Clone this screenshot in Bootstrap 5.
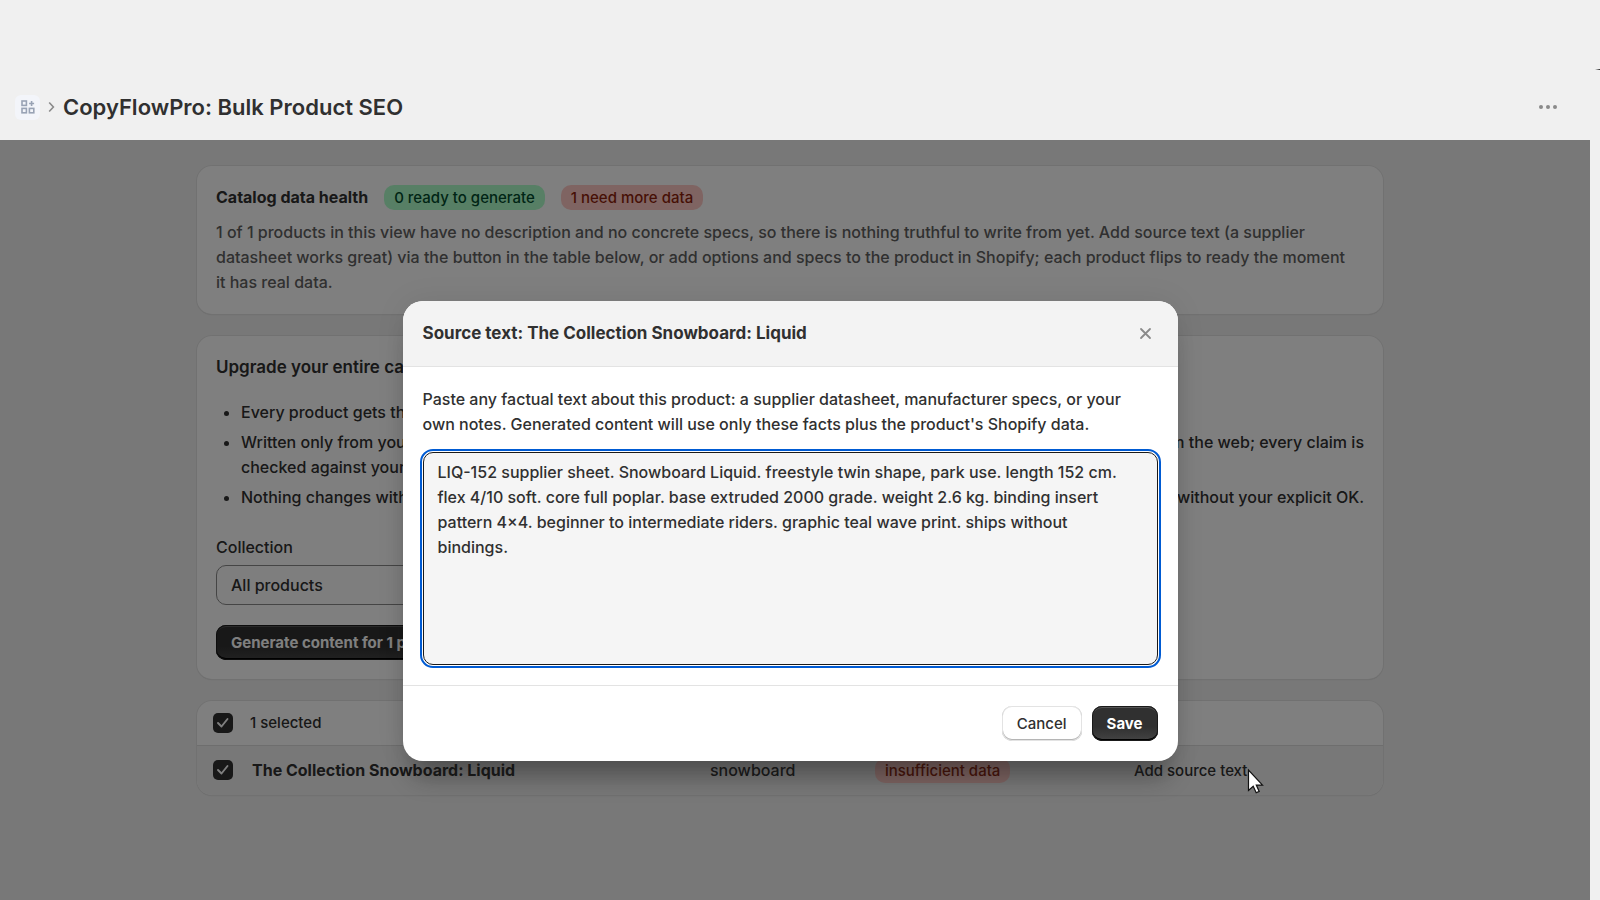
<!DOCTYPE html>
<html lang="en">
<head>
<meta charset="utf-8">
<meta name="viewport" content="width=device-width, initial-scale=1">
<title>CopyFlowPro: Bulk Product SEO</title>
<link rel="stylesheet" href="https://cdn.jsdelivr.net/npm/bootstrap@5.3.0/dist/css/bootstrap.min.css">
<style>
  body { font-family: Inter, "Liberation Sans", sans-serif; font-size: 16px; line-height: 25px; font-weight: 450; color: #303030; background: #f0f0f0; }
  .title-bar { padding: 74px 41px 0 15px; min-height: 140px; }
  .title-bar::after { content: ""; position: absolute; top: 69px; right: 0; width: 5px; height: 1px; background: linear-gradient(90deg, transparent, #222); }
  .title-bar h1 { font-size: 22px; line-height: 30px; font-weight: 600; }
  .app-chip { width: 25px; height: 25px; border-radius: 6px; background: #f3f5fa; }
  .app-frame { margin-right: 10px; background: #f1f1f1; overflow: hidden; }
  .app-content { max-width: 1186px; margin: 26px auto 0; gap: 22px; }
  .app-inner { padding-right: 10px; }
  .panel { background: #fff; border-radius: 15px; box-shadow: 0 0 0 1px #e3e3e3, 0 1px 1px #c4c4c4; }
  .panel-pad { padding: 19px; }
  .panel h2, .modal-title { font-size: 17px; line-height: 25px; font-weight: 600; margin: 0; }
  .panel h2.fs-body { font-size: 16px; font-weight: 650; }
  .panel p { padding-right: 10px; }
  .health-head { gap: 16px; margin-bottom: 10px; }
  .tone { border-radius: 10px; padding: 0 10px; font-size: 15px; line-height: 25px; display: inline-block; }
  .tone-ok { background: #affeca; color: #014b2c; }
  .tone-bad { background: #fec9c5; color: #8e1f0b; }
  .muted { color: #616161; }
  .points { padding-left: 25px; margin: 20px 0 25px; }
  .points li + li { margin-top: 5px; }
  .field-label { margin-bottom: 5px; }
  .form-select { height: 40px; border: 1px solid #8a8a8a; border-radius: 10px; padding: 0 14px; margin-bottom: 20px; font-size: 16px; font-weight: 450; color: #303030; background-color: #fdfdfd; }
  .btn { height: 35px; border-radius: 10px; padding: 0 15px; font-size: 15px; line-height: 25px; border: 0; }
  .btn-solid, .btn-solid:hover { background: linear-gradient(#303030 60%, #444); color: #fff; font-weight: 700; box-shadow: 0 0 0 1px #1a1a1a inset, 0 2px 0 0 #555 inset, 0 -2px 0 0 #000 inset; }
  .btn-plain, .btn-plain:hover { background: #fff; color: #303030; font-weight: 550; box-shadow: 0 0 0 1px #e3e3e3 inset, 0 -1px 0 1px #b5b5b5 inset; }
  .grid-table { table-layout: fixed; }
  .grid-table th, .grid-table td { padding: 0; vertical-align: middle; border: 0; }
  .grid-table thead th { height: 44px; font-weight: 500; font-size: 15px; }
  .grid-table tbody tr > * { height: 50px; background: #f1f1f1; border-top: 1px solid #dcdcdc; }
  .grid-table tbody th { font-weight: 650; padding-left: 2px; }
  .grid-table tbody td:first-child { border-bottom-left-radius: 15px; }
  .grid-table tbody td:last-child { border-bottom-right-radius: 15px; }
  .grid-table .form-check-input { width: 20px; height: 20px; margin: 0 0 0 16px; border-radius: 5px; border: 0; display: block; background-color: #303030; }
  .grid-table .form-check-input:checked { background-size: 20px 20px; background-image: url("data:image/svg+xml,%3csvg xmlns='http://www.w3.org/2000/svg' viewBox='0 0 20 20'%3e%3cpath fill='none' stroke='%23fff' stroke-width='1.9' stroke-linecap='round' stroke-linejoin='round' d='m5 10 3.500 3.500 6-7.500'/%3e%3c/svg%3e"); }
  .col-pick { width: 53px; } .col-type { width: 165px; } .col-state { width: 259px; } .col-act { width: 249px; }
  .link-act { font-size: 15px; font-weight: 500; color: #303030; text-decoration: none; }
  .shade { position: absolute; inset: 0; background: rgba(0,0,0,.5); padding-right: 10px; }
  .shade .modal-dialog { max-width: 775px; margin: 161px auto 0; }
  .modal-content { border: 0; border-radius: 20px; overflow: hidden; background: #fff; }
  .dialog-shadow { border-radius: 20px; box-shadow: 0 25px 25px -10px rgba(26,26,26,.4), 0 0 30px rgba(0,0,0,.08); }
  .modal-header { padding: 20px; height: 66px; background: #f3f3f3; border-bottom: 1px solid #e3e3e3; }
  .modal-title { font-weight: 700; }
  .modal-body { padding: 20px; }
  .modal-body label { margin-bottom: 15px; padding-right: 20px; }
  .modal-footer { padding: 20px; gap: 10px; border-top: 1px solid #e3e3e3; }
  .modal-footer > * { margin: 0; }
  .icon-btn { background: none; border: 0; padding: 0; line-height: 0; }
  .source-box { height: 213px; padding: 7px 20px 7px 14px; font-size: 16px; line-height: 25px; font-weight: 450; border: 1px solid #1a1a1a; border-radius: 10px; outline: 2px solid #005bd3; outline-offset: 1px; background: #f5f5f5; color: #303030; resize: none; }
  .pointer { position: absolute; left: 1247px; top: 628px; }
</style>
</head>
<body class="d-flex flex-column min-vh-100">
<header class="title-bar position-relative d-flex align-items-center">
  <span class="app-chip d-flex align-items-center justify-content-center">
    <svg width="14" height="14" viewBox="0 0 14 14" fill="none" stroke="#99a3b5" stroke-width="1.6"><rect x="1" y="1" width="4.4" height="4.4"/><rect x="1" y="8.4" width="4.4" height="4.4"/><rect x="8.4" y="8.4" width="4.4" height="4.4"/><path d="M10.600 1v5M8.100 3.500h5"/></svg>
  </span>
  <svg class="mx-2" width="7" height="12" viewBox="0 0 7 12" fill="none" stroke="#8a8a8a" stroke-width="1.600"><path d="M1.200 1.500 5.400 6 1.200 10.500"/></svg>
  <h1 class="mb-0">CopyFlowPro: Bulk Product SEO</h1>
  <button class="icon-btn ms-auto" type="button" aria-label="More actions">
    <svg width="22" height="6" viewBox="0 0 22 6" fill="#8a8a8a"><circle cx="4" cy="3" r="2"/><circle cx="11" cy="3" r="2"/><circle cx="18" cy="3" r="2"/></svg>
  </button>
</header>
<main class="app-frame position-relative flex-grow-1">
  <div class="app-inner">
  <div class="app-content d-flex flex-column">
    <section class="panel panel-pad">
      <div class="health-head d-flex align-items-center">
        <h2 class="fs-body">Catalog data health</h2>
        <span class="tone tone-ok">0 ready to generate</span>
        <span class="tone tone-bad">1 need more data</span>
      </div>
      <p class="muted mb-0">1 of 1 products in this view have no description and no concrete specs, so there is nothing truthful to write from yet. Add source text (a supplier datasheet works great) via the button in the table below, or add options and specs to the product in Shopify; each product flips to ready the moment it has real data.</p>
    </section>
    <section class="panel panel-pad">
      <h2>Upgrade your entire catalog</h2>
      <ul class="points">
        <li>Every product gets the same care</li>
        <li><div class="d-flex justify-content-between"><span>Written only from your data</span><span>from the web; every claim is</span></div>checked against your data</li>
        <li><div class="d-flex justify-content-between"><span>Nothing changes without you</span><span>without your explicit OK.</span></div></li>
      </ul>
      <label for="collection" class="field-label d-block">Collection</label>
      <select id="collection" class="form-select w-50"><option>All products</option></select>
      <button class="btn btn-solid" type="button">Generate content for 1 product</button>
    </section>
    <section class="panel">
      <table class="grid-table w-100">
        <colgroup><col class="col-pick"><col><col class="col-type"><col class="col-state"><col class="col-act"></colgroup>
        <thead><tr>
          <th><input class="form-check-input" type="checkbox" checked aria-label="Select all"></th>
          <th colspan="4">1 selected</th>
        </tr></thead>
        <tbody><tr>
          <td><input class="form-check-input" type="checkbox" checked aria-label="Select The Collection Snowboard: Liquid"></td>
          <th scope="row">The Collection Snowboard: Liquid</th>
          <td>snowboard</td>
          <td><span class="tone tone-bad">insufficient data</span></td>
          <td><a class="link-act" href="#source">Add source text</a></td>
        </tr></tbody>
      </table>
    </section>
  </div>
  </div>
  <div class="shade">
    <div class="modal-dialog dialog-shadow" role="dialog" aria-labelledby="dialogTitle">
      <div class="modal-content">
        <div class="modal-header d-flex justify-content-between">
          <h2 class="modal-title" id="dialogTitle">Source text: The Collection Snowboard: Liquid</h2>
          <button class="icon-btn" type="button" aria-label="Close">
            <svg width="25" height="25" viewBox="0 0 25 25" fill="none" stroke="#8a8a8a" stroke-width="1.800" stroke-linecap="round"><path d="m8 8 9 9M17 8l-9 9"/></svg>
          </button>
        </div>
        <div class="modal-body">
          <label for="source" class="d-block">Paste any factual text about this product: a supplier datasheet, manufacturer specs, or your own notes. Generated content will use only these facts plus the product's Shopify data.</label>
          <textarea id="source" class="source-box w-100 d-block">LIQ-152 supplier sheet. Snowboard Liquid. freestyle twin shape, park use. length 152 cm. flex 4/10 soft. core full poplar. base extruded 2000 grade. weight 2.6 kg. binding insert pattern 4×4. beginner to intermediate riders. graphic teal wave print. ships without bindings.</textarea>
        </div>
        <div class="modal-footer">
          <button class="btn btn-plain" type="button">Cancel</button>
          <button class="btn btn-solid" type="button">Save</button>
        </div>
      </div>
    </div>
    <svg class="pointer" width="17" height="26" viewBox="0 0 17 26"><path d="M1.500 2v20.500l4.700-4.300 3 6.600 3-1.400-2.900-6.300h6.200z" fill="#fff" stroke="#111" stroke-width="1.200"/></svg>
  </div>
</main>
<script src="https://cdn.jsdelivr.net/npm/bootstrap@5.3.0/dist/js/bootstrap.bundle.min.js"></script>
</body>
</html>
